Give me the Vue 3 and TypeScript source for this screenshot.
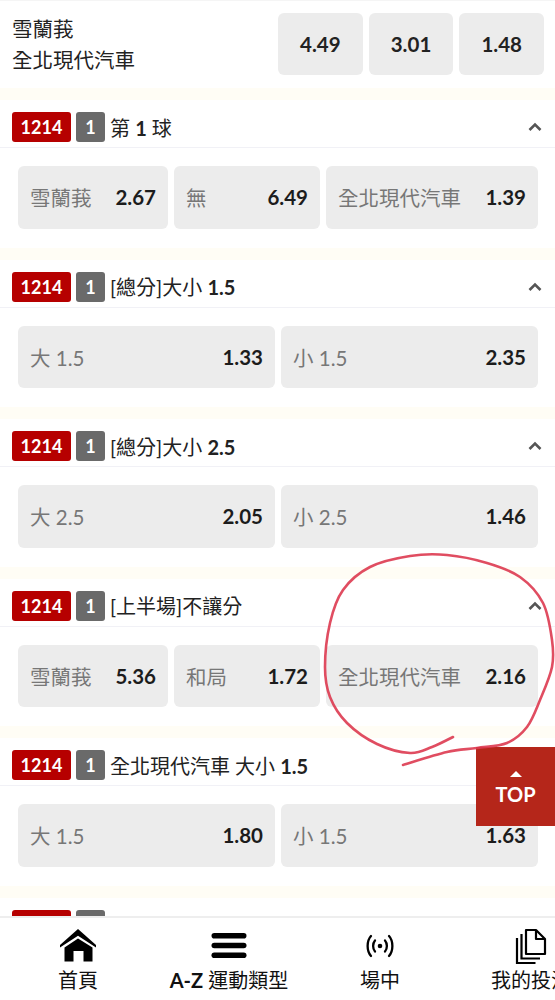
<template>
  <div class="page">
    <!-- top match row -->
    <div class="match-row">
      <div class="teams">
        <div>雪蘭莪</div>
        <div>全北現代汽車</div>
      </div>
      <div class="match-odds">
        <div v-for="o in ['4.49', '3.01', '1.48']" :key="o" class="match-odd">{{ o }}</div>
      </div>
    </div>

    <section v-for="m in markets" :key="m.title" class="market">
      <div class="market-head">
        <span class="badge badge-red">1214</span>
        <span class="badge badge-grey">1</span>
        <span class="market-title">
          <template v-for="(part, i) in titleParts(m.title)" :key="i">
            <b v-if="i % 2">{{ part }}</b>
            <template v-else>{{ part }}</template>
          </template>
        </span>
        <svg class="chevron" width="14" height="10" viewBox="0 0 14 10" fill="none">
          <path d="M1.5 8L7 2.5L12.5 8" stroke="#555" stroke-width="2.6" />
        </svg>
      </div>
      <div class="options" :class="{ 'options-three': m.options.length === 3 }">
        <div v-for="o in m.options" :key="o.label" class="option">
          <span class="option-label">{{ o.label }}</span>
          <span class="option-value">{{ o.value }}</span>
        </div>
      </div>
    </section>

    <!-- back to top -->
    <div class="to-top">
      <span class="to-top-arrow"></span>
      <span>TOP</span>
    </div>

    <!-- hand drawn circle on the screenshot -->
    <svg class="scribble" width="555" height="1000" viewBox="0 0 555 1000" fill="none">
      <path :d="scribblePath" stroke="#dd3a50" stroke-opacity="0.9" stroke-width="2.6" stroke-linecap="round" stroke-linejoin="round" />
    </svg>

    <nav class="bottom-nav">
      <div class="nav-item">
        <svg class="nav-icon" width="36" height="36" viewBox="0 0 36 36">
          <path d="M18 1L0 17V19.5L18 7.8L36 19.5V17Z" fill="#000" />
          <path d="M4.5 19.5L18 10.5L32.5 19.5V33.5H23.5V23H13.5V33.5H4.5Z" fill="#000" />
        </svg>
        <span class="nav-label">首頁</span>
      </div>
      <div class="nav-item">
        <svg class="nav-icon" width="36" height="36" viewBox="0 0 36 36">
          <rect x="0.5" y="5" width="35" height="5.6" rx="2.8" fill="#000" />
          <rect x="0.5" y="14.7" width="35" height="5.6" rx="2.8" fill="#000" />
          <rect x="0.5" y="24.4" width="35" height="5.6" rx="2.8" fill="#000" />
        </svg>
        <span class="nav-label"><b>A-Z</b> 運動類型</span>
      </div>
      <div class="nav-item">
        <svg class="nav-icon" width="30" height="36" viewBox="0 0 30 36" fill="none" stroke="#000" stroke-width="2.3" stroke-linecap="round">
          <circle cx="15" cy="18" r="2.3" fill="#000" stroke="none" />
          <path d="M10 12.5C7.5 15.5 7.5 20.5 10 23.5" />
          <path d="M20 12.5C22.5 15.5 22.5 20.5 20 23.5" />
          <path d="M6 8C1.5 13 1.5 23 6 28" />
          <path d="M24 8C28.5 13 28.5 23 24 28" />
        </svg>
        <span class="nav-label">場中</span>
      </div>
      <div class="nav-item">
        <svg class="nav-icon" width="32" height="36" viewBox="0 0 32 36" fill="none" stroke="#000" stroke-width="2.2">
          <path d="M11 2H21L30 11V26H11Z" stroke-linejoin="round" />
          <path d="M21 2V11H30" stroke-linejoin="round" />
          <path d="M6.5 6V30.5H25" />
          <path d="M2 10V35H20.5" />
        </svg>
        <span class="nav-label">我的投注</span>
      </div>
    </nav>
  </div>
</template>

<script setup lang="ts">
interface Option {
  label: string
  value: string
}

interface Market {
  title: string
  options: Option[]
}

const markets: Market[] = [
  {
    title: '第 1 球',
    options: [
      { label: '雪蘭莪', value: '2.67' },
      { label: '無', value: '6.49' },
      { label: '全北現代汽車', value: '1.39' }
    ]
  },
  {
    title: '[總分]大小 1.5',
    options: [
      { label: '大 1.5', value: '1.33' },
      { label: '小 1.5', value: '2.35' }
    ]
  },
  {
    title: '[總分]大小 2.5',
    options: [
      { label: '大 2.5', value: '2.05' },
      { label: '小 2.5', value: '1.46' }
    ]
  },
  {
    title: '[上半場]不讓分',
    options: [
      { label: '雪蘭莪', value: '5.36' },
      { label: '和局', value: '1.72' },
      { label: '全北現代汽車', value: '2.16' }
    ]
  },
  {
    title: '全北現代汽車 大小 1.5',
    options: [
      { label: '大 1.5', value: '1.80' },
      { label: '小 1.5', value: '1.63' }
    ]
  },
  // only the badges of this one show above the nav
  { title: '', options: [] }
]

// digits in the titles are bold, the rest is regular
function titleParts(title: string): string[] {
  return title.split(/(\d[\d.]*)/)
}

// points traced from the red pen stroke
const points: [number, number][] = [
  [453, 737], [432, 747], [410, 753], [377, 744], [347, 723], [330, 697], [325, 667],
  [330, 623], [343, 590], [370, 567], [410, 556], [447, 555], [487, 563], [520, 577],
  [543, 603], [552, 640], [552, 667], [540, 700], [527, 727], [507, 743], [477, 748],
  [447, 752], [403, 765]
]

// catmull-rom through the points
function smooth(pts: [number, number][]): string {
  let d = `M${pts[0][0]} ${pts[0][1]}`
  for (let i = 0; i < pts.length - 1; i++) {
    const p0 = pts[Math.max(i - 1, 0)]
    const p1 = pts[i]
    const p2 = pts[i + 1]
    const p3 = pts[Math.min(i + 2, pts.length - 1)]
    const c1x = p1[0] + (p2[0] - p0[0]) / 6
    const c1y = p1[1] + (p2[1] - p0[1]) / 6
    const c2x = p2[0] - (p3[0] - p1[0]) / 6
    const c2y = p2[1] - (p3[1] - p1[1]) / 6
    d += `C${c1x} ${c1y} ${c2x} ${c2y} ${p2[0]} ${p2[1]}`
  }
  return d
}

const scribblePath = smooth(points)
</script>

<style>
html,
body {
  margin: 0;
  overflow: hidden;
  background: #fff;
}
</style>

<style scoped>
.page {
  position: relative;
  width: 555px;
  height: 1000px;
  overflow: hidden;
  background: #fff;
  font-family: Lato, "Noto Sans CJK TC", sans-serif;
  color: #222;
}

.match-row {
  display: flex;
  justify-content: space-between;
  height: 88px;
  padding: 12px 11px 0 12px;
  box-sizing: border-box;
  border-top: 1px solid #f5f5f5;
}

.teams {
  font-size: 20.5px;
  line-height: 31px;
  padding-top: 1px;
}

.match-odds {
  display: flex;
  gap: 6px;
}

.match-odd {
  display: flex;
  align-items: center;
  justify-content: center;
  width: 84.67px;
  height: 62px;
  border-radius: 6px;
  background: #ececec;
  font-size: 20.5px;
  font-weight: 700;
  color: #222;
}

.market {
  height: 159.5px;
  box-sizing: border-box;
  border-top: 12px solid #fffdf5;
}

.market-head {
  display: flex;
  align-items: center;
  height: 48px;
  box-sizing: border-box;
  padding: 7px 13px 0 12px;
  border-bottom: 1px solid #f1f1f6;
}

.badge {
  display: flex;
  align-items: center;
  justify-content: center;
  height: 30px;
  border-radius: 3px;
  color: #fff;
  font-size: 18px;
  font-weight: 700;
}

.badge-red {
  width: 59px;
  background: #b60000;
}

.badge-grey {
  width: 29px;
  margin-left: 5px;
  background: #6a6a6a;
}

.market-title {
  flex: 1;
  margin-left: 5px;
  font-size: 20px;
  color: #222;
  white-space: pre;
}

.options {
  display: grid;
  grid-template-columns: 257px 257px;
  gap: 6px;
  padding: 18px 17px 0 18px;
}

.options-three {
  grid-template-columns: 150px 146px 212px;
}

.option {
  display: flex;
  align-items: center;
  justify-content: space-between;
  height: 62.5px;
  padding: 0 12px;
  box-sizing: border-box;
  border-radius: 6px;
  background: #ececec;
}

.option-label {
  font-size: 20.5px;
  color: #777;
}

.option-value {
  font-size: 20.5px;
  font-weight: 700;
  color: #1c1c1c;
}

.to-top {
  position: absolute;
  left: 476px;
  top: 747px;
  width: 79px;
  height: 79px;
  display: flex;
  flex-direction: column;
  align-items: center;
  justify-content: flex-start;
  padding-top: 24px;
  box-sizing: border-box;
  background: #b5261a;
  color: #fff;
  font-size: 20px;
  font-weight: 700;
  line-height: 28px;
}

.to-top-arrow {
  width: 0;
  height: 0;
  margin-bottom: 3px;
  border-left: 6px solid transparent;
  border-right: 6px solid transparent;
  border-bottom: 6px solid #fff;
}

.scribble {
  position: absolute;
  left: 0;
  top: 0;
  pointer-events: none;
}

.bottom-nav {
  position: absolute;
  left: 0;
  right: 0;
  top: 916px;
  bottom: 0;
  display: flex;
  padding-left: 2.5px;
  background: #fff;
  border-top: 2px solid #eeeeee;
  overflow: hidden;
}

.nav-item {
  flex: 0 0 151px;
  display: flex;
  flex-direction: column;
  align-items: center;
  padding-top: 10px;
  white-space: nowrap;
}

.nav-icon {
  flex: none;
  margin-bottom: 3px;
}

.nav-label {
  font-size: 20px;
  line-height: 26px;
  color: #111;
}

.nav-label b {
  font-weight: 700;
}
</style>
